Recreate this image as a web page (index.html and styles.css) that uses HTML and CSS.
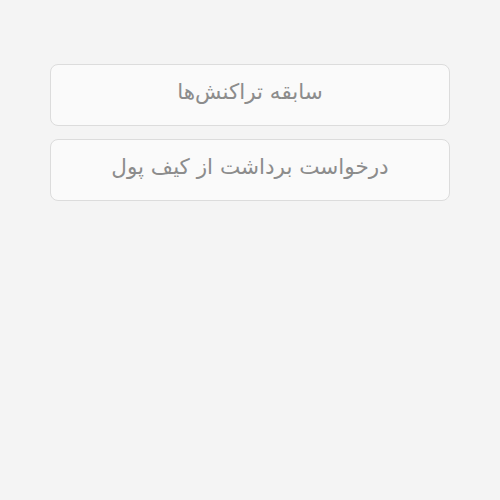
FILE: index.html
```html
<!DOCTYPE html>
<html lang="fa" dir="rtl">
<head>
	<meta charset="UTF-8">
	<title>کیف پول</title>
	<link rel="stylesheet" href="styles.css">
</head>
<body>
	<!-- منوی کیف پول -->
	<div class="menu">
		<a class="menu_item" href="#">سابقه تراکنش‌ها</a>
		<a class="menu_item" href="#">درخواست برداشت از کیف پول</a>
	</div>
</body>
</html>
```

FILE: styles.css
```css
body{
	margin:0;
	background:#f4f4f4;
	font-family:"DejaVu Sans",sans-serif;
}
.menu{
	display:flex;
	flex-direction:column;
	gap:13px;
	width:400px;
	margin:0 auto;
	padding-top:64px;
}
.menu_item{
	box-sizing:border-box;
	display:flex;
	align-items:center;
	justify-content:center;
	height:62px;
	padding-bottom:7px;
	background:#fafafa;
	border:1px solid #dcdcdc;
	border-radius:8px;
	color:#8c8c8c;
	font-size:21.5px;
	text-decoration:none;
}
```
